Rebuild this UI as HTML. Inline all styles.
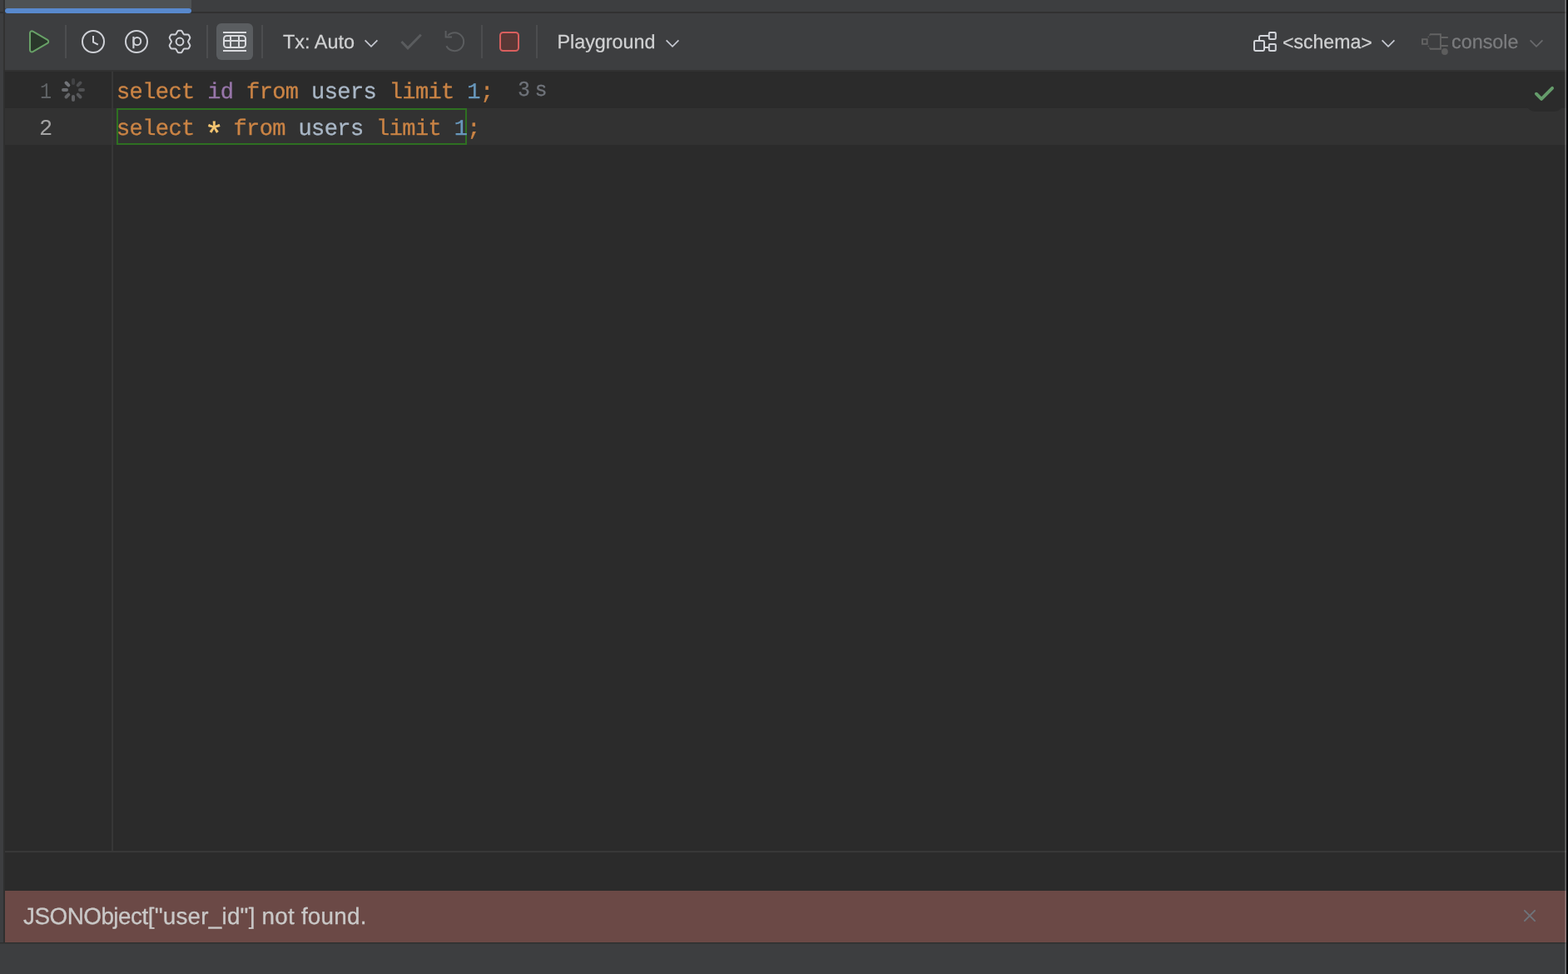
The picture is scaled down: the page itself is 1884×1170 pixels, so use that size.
<!DOCTYPE html>
<html lang="en">
<head>
<meta charset="utf-8">
<title>Query Console</title>
<style>
*{box-sizing:border-box;margin:0;padding:0}
html,body{width:1884px;height:1170px;overflow:hidden;background:#3d3e40}
body{position:relative;font-family:"Liberation Sans",sans-serif;color:#ced0d6}
.abs{position:absolute}
#frame{will-change:transform;text-rendering:geometricPrecision;position:absolute;left:0;top:0;width:1884px;height:1170px;overflow:hidden;background:#3d3e40}
/* window edges */
#leftline{left:4px;top:0;width:2px;height:1133px;background:linear-gradient(180deg,#323232 0,#323232 84px,#2f2f2f 84px,#2f2f2f 100%)}
#rightlight{left:1880px;top:0;width:2px;height:1170px;background:linear-gradient(90deg,rgba(255,255,255,0.19) 0,rgba(255,255,255,0.19) 50%,rgba(255,255,255,0.27) 50%,rgba(255,255,255,0.27) 100%)}
#rightblack{left:1882px;top:0;width:2px;height:1170px;background:#050609}
/* tab strip */
#tab{left:6px;top:0;width:224px;height:10px;background:#4e5254}
#tabline{left:0;top:14px;width:1882px;height:2px;background:#313131}
#tabblue{left:6px;top:10px;width:224px;height:6px;border-radius:3px;background:#5889cd}
/* toolbar */
#toolbar{left:6px;top:16px;width:1876px;height:68px;background:#3d3e40}
#toolline{left:6px;top:84px;width:1876px;height:2px;background:#323232}
.sep{position:absolute;top:30px;width:2px;height:40px;background:#4c4d4f}
.tt{position:absolute;white-space:pre;font-size:23.3px;line-height:28px;height:28px;top:36px;color:#d0d1d2;-webkit-text-stroke:0.25px;transform-origin:0 0;transform:scaleX(1)}
svg{position:absolute;overflow:visible}
/* editor */
#editor{left:6px;top:86px;width:1876px;height:936px;background:#2b2b2b}
#row2{left:6px;top:130px;width:1876px;height:44px;background:#323232}
#gutline{left:134px;top:86px;width:2px;height:936px;background:#373737}
#edline{left:6px;top:1022px;width:1876px;height:2px;background:#383838}
#below{left:6px;top:1024px;width:1876px;height:46px;background:#2b2b2b}
.code{position:absolute;left:140px;white-space:pre;font-family:"Liberation Mono",monospace;font-size:27px;letter-spacing:-0.6px;line-height:44px;height:44px;color:#a9b7c6;margin-top:3.7px;-webkit-text-stroke:0.3px}
.kw{color:#cb8445}.col{color:#9876aa}.num{color:#6897bb}.star{color:#f7c772;display:inline-block;transform:translateY(9.1px) scale(1.45);transform-origin:50% 50%}
.ln{position:absolute;font-family:"Liberation Mono",monospace;font-size:27px;line-height:44px;height:44px;left:47px;width:16px;text-align:center;margin-top:3.9px}
#box{left:140px;top:130px;width:421px;height:44px;border:2px solid #2e7021}
#hint{left:622.8px;top:86px;height:44px;line-height:44px;font-size:24.5px;word-spacing:0.8px;color:#6f737a;white-space:pre;-webkit-text-stroke:0.3px}
#status{left:1834px;top:86px;width:44px;height:48px;background:#2b2b2b;border-radius:0 0 10px 10px}
/* error */
#err{left:6px;top:1070px;width:1876px;height:62px;background:#6b4946}
#errtext{left:28.4px;top:1069.8px;height:62px;line-height:62px;font-size:27.9px;color:#c9c8c7;-webkit-text-stroke:0.3px;white-space:pre;transform-origin:0 0;transform:scaleX(0.998)}
#errline{left:0;top:1132px;width:1882px;height:2px;background:linear-gradient(180deg,#2e3030 0,#2e3030 50%,#353636 50%,#353636 100%)}
</style>
</head>
<body>
<div id="frame">
  <div class="abs" id="tab"></div>
  <div class="abs" id="tabline"></div>
  <div class="abs" id="tabblue"></div>
  <div class="abs" id="toolbar"></div>
  <div class="abs" id="toolline"></div>

  <svg class="abs" id="i-run" style="left:32px;top:34px" width="32" height="32" viewBox="0 0 32 32"><path d="M4.00 5.69 A2.3 2.3 0 0 1 7.45 3.70 L25.07 13.91 A2.3 2.3 0 0 1 25.07 17.89 L7.45 28.10 A2.3 2.3 0 0 1 4.00 26.11 Z" fill="#2a372b" stroke="#68a167" stroke-width="2" stroke-linejoin="round"/></svg>
  <div class="sep" style="left:78px"></div>
  <svg class="abs" id="i-clock" style="left:96px;top:34px" width="32" height="32" viewBox="0 0 32 32"><circle cx="16" cy="16" r="13" fill="none" stroke="#ced0d6" stroke-width="2"/><path d="M16 9 V16.6 L21.8 19.6" fill="none" stroke="#ced0d6" stroke-width="2"/></svg>
  <svg class="abs" id="i-p" style="left:148px;top:34px" width="32" height="32" viewBox="0 0 32 32"><circle cx="16" cy="16" r="13" fill="none" stroke="#ced0d6" stroke-width="2"/><path d="M12.4 9.9 V24.2" fill="none" stroke="#ced0d6" stroke-width="2.1"/><ellipse cx="16.8" cy="15.6" rx="4.4" ry="4.7" fill="none" stroke="#ced0d6" stroke-width="2"/></svg>
  <svg class="abs" id="i-gear" style="left:200px;top:34px" width="32" height="32" viewBox="0 0 32 32"><path d="M13.42 3.50 A1.6 1.6 0 0 1 14.80 2.70 L17.20 2.70 A1.6 1.6 0 0 1 18.58 3.50 L20.44 6.71 A1.6 1.6 0 0 0 21.82 7.51 L25.53 7.51 A1.6 1.6 0 0 1 26.92 8.31 L28.12 10.39 A1.6 1.6 0 0 1 28.12 11.99 L26.26 15.20 A1.6 1.6 0 0 0 26.26 16.80 L28.12 20.01 A1.6 1.6 0 0 1 28.12 21.61 L26.92 23.69 A1.6 1.6 0 0 1 25.53 24.49 L21.82 24.49 A1.6 1.6 0 0 0 20.44 25.29 L18.58 28.50 A1.6 1.6 0 0 1 17.20 29.30 L14.80 29.30 A1.6 1.6 0 0 1 13.42 28.50 L11.56 25.29 A1.6 1.6 0 0 0 10.18 24.49 L6.47 24.49 A1.6 1.6 0 0 1 5.08 23.69 L3.88 21.61 A1.6 1.6 0 0 1 3.88 20.01 L5.74 16.80 A1.6 1.6 0 0 0 5.74 15.20 L3.88 11.99 A1.6 1.6 0 0 1 3.88 10.39 L5.08 8.31 A1.6 1.6 0 0 1 6.47 7.51 L10.18 7.51 A1.6 1.6 0 0 0 11.56 6.71 Z" fill="none" stroke="#ced0d6" stroke-width="2" stroke-linejoin="round"/><circle cx="16" cy="16" r="4.4" fill="none" stroke="#ced0d6" stroke-width="2"/></svg>
  <div class="sep" style="left:248px"></div>
  <div class="abs" id="tblbtn" style="left:260px;top:28px;width:44px;height:44px;border-radius:6px;background:#5a5d60"></div>
  <svg class="abs" id="i-table" style="left:266px;top:34px" width="32" height="32" viewBox="0 0 32 32"><path d="M2 5 H30 M2 27 H30" stroke="#d9dade" stroke-width="2" fill="none"/><rect x="3" y="9" width="26" height="14" rx="3.5" fill="none" stroke="#d9dade" stroke-width="2"/><path d="M3 15 H29 M11 9 V23 M21 9 V23" stroke="#d9dade" stroke-width="2" fill="none"/></svg>
  <div class="sep" style="left:314px"></div>
  <div class="tt" style="left:340.4px;transform:scaleX(1.006)">Tx: Auto</div>
  <svg class="abs chev" style="left:436px;top:42px" width="20" height="20" viewBox="0 0 20 20"><path d="M2.6 6.4 L10 13.8 L17.4 6.4" fill="none" stroke="#c6c9d2" stroke-width="1.7"/></svg>
  <svg class="abs" id="i-check" style="left:478px;top:34px" width="32" height="32" viewBox="0 0 32 32"><path d="M4.4 16 L12 23.8 L27.8 7.8" fill="none" stroke="#5a5c5e" stroke-width="3"/></svg>
  <svg class="abs" id="i-undo" style="left:530px;top:34px" width="32" height="32" viewBox="0 0 32 32"><path d="M6.4 21.2 A11 11 0 1 0 8.2 8.6" fill="none" stroke="#5b5d5f" stroke-width="2"/><path d="M5.6 3 V10.4 H13" fill="none" stroke="#5b5d5f" stroke-width="2"/></svg>
  <div class="sep" style="left:578px"></div>
  <div class="abs" id="stop" style="left:600px;top:38px;width:24px;height:24px;border:2px solid #d95f5e;border-radius:4.5px;background:#593836"></div>
  <div class="sep" style="left:644px"></div>
  <div class="tt" style="left:669.5px">Playground</div>
  <svg class="abs chev" style="left:798px;top:42px" width="20" height="20" viewBox="0 0 20 20"><path d="M2.6 6.4 L10 13.8 L17.4 6.4" fill="none" stroke="#c6c9d2" stroke-width="1.7"/></svg>
  <svg class="abs" id="i-schema" style="left:1504px;top:34px" width="32" height="32" viewBox="0 0 32 32"><rect x="3" y="15" width="12" height="12" rx="1.4" fill="#43454a" stroke="#d3d5da" stroke-width="2"/><rect x="20.8" y="5" width="8" height="8" rx="1.3" fill="#43454a" stroke="#d3d5da" stroke-width="2"/><rect x="20.8" y="19" width="8" height="8" rx="1.3" fill="#43454a" stroke="#d3d5da" stroke-width="2"/><path d="M9 15 V11 Q9 9 11 9 H20.8 M15 23 H20.8" fill="none" stroke="#d3d5da" stroke-width="2"/></svg>
  <div class="tt" style="left:1541px;transform:scaleX(0.99)"><span style="position:relative;top:1.3px">&lt;</span>schema<span style="position:relative;top:1.3px">&gt;</span></div>
  <svg class="abs chev" style="left:1658px;top:42px" width="20" height="20" viewBox="0 0 20 20"><path d="M2.6 6.4 L10 13.8 L17.4 6.4" fill="none" stroke="#c6c9d2" stroke-width="1.7"/></svg>
  <svg class="abs" id="i-console" style="left:1706px;top:34px" width="36" height="36" viewBox="0 0 36 36"><rect x="3" y="13.2" width="5.7" height="5.6" fill="none" stroke="#626262" stroke-width="2"/><path d="M12 7.3 H24.9 V24.7 H12" fill="none" stroke="#636363" stroke-width="1.9"/><path d="M12.4 7.6 L9.4 11.4 M12.4 24.4 L9.4 20.6" fill="none" stroke="#5a5a5a" stroke-width="1.6" stroke-dasharray="1.6 1"/><path d="M25.8 10.9 H33.8 M25.8 21 H33.8" stroke="#636363" stroke-width="2" fill="none"/><circle cx="29.9" cy="28" r="3.9" fill="#5d5d5d"/></svg>
  <div class="tt" style="left:1743.8px;color:#7b7c7e;transform:scaleX(1.002)">console</div>
  <svg class="abs chev" style="left:1836px;top:42px" width="20" height="20" viewBox="0 0 20 20"><path d="M2.6 6.4 L10 13.8 L17.4 6.4" fill="none" stroke="#696a6c" stroke-width="1.8"/></svg>

  <div class="abs" id="editor"></div>
  <div class="abs" id="row2"></div>
  <div class="abs" id="gutline"></div>
  <div class="abs" id="edline"></div>
  <div class="abs" id="below"></div>

  <div class="ln" style="top:86px;color:#606366;transform:scaleX(0.87)">1</div>
  <div class="ln" style="top:130px;color:#a4a3a3">2</div>
  <svg class="abs" id="spinner" style="left:72px;top:92px" width="32" height="32" viewBox="0 0 32 32"><path d="M16.00 8.00 L16.00 4.00" stroke="#414244" stroke-width="4" stroke-linecap="round" fill="none"/><path d="M21.66 10.34 L24.49 7.51" stroke="#4c4d4f" stroke-width="4" stroke-linecap="round" fill="none"/><path d="M24.00 16.00 L28.00 16.00" stroke="#505153" stroke-width="4" stroke-linecap="round" fill="none"/><path d="M21.66 21.66 L24.49 24.49" stroke="#57585b" stroke-width="4" stroke-linecap="round" fill="none"/><path d="M16.00 24.00 L16.00 28.00" stroke="#5d5e61" stroke-width="4" stroke-linecap="round" fill="none"/><path d="M10.34 21.66 L7.51 24.49" stroke="#626366" stroke-width="4" stroke-linecap="round" fill="none"/><path d="M8.00 16.00 L4.00 16.00" stroke="#6b6d71" stroke-width="4" stroke-linecap="round" fill="none"/><path d="M10.34 10.34 L7.51 7.51" stroke="#727479" stroke-width="4" stroke-linecap="round" fill="none"/></svg>
  <div class="abs" id="box"></div>
  <div class="code" style="top:86px"><span class="kw">select</span> <span class="col">id</span> <span class="kw">from</span> users <span class="kw">limit</span> <span class="num">1</span><span class="kw">;</span></div>
  <div class="code" style="top:130px"><span class="kw">select</span> <span class="star">*</span> <span class="kw">from</span> users <span class="kw">limit</span> <span class="num">1</span><span class="kw">;</span></div>
  <div class="abs" id="hint">3 s</div>
  <div class="abs" id="status"></div>
  <svg class="abs" id="i-ok" style="left:1840px;top:96px" width="32" height="32" viewBox="0 0 32 32"><path d="M5.9 16.7 L12.1 22.9 L25.1 9.9" fill="none" stroke="#659c6b" stroke-width="3.9" stroke-linecap="round" stroke-linejoin="round"/></svg>

  <div class="abs" id="err"></div>
  <div class="abs" id="errtext"><span style="letter-spacing:-0.5px">JSONObject</span><span style="letter-spacing:0.22px">["user_id"] not found.</span></div>

  <svg class="abs" id="i-close" style="left:1828px;top:1090px" width="20" height="20" viewBox="0 0 20 20"><path d="M3.9 3.9 L16.1 16.1 M16.1 3.9 L3.9 16.1" fill="none" stroke="#6f737a" stroke-width="2" stroke-linecap="round"/></svg>

  <div class="abs" id="errline"></div>
  <div class="abs" id="leftline"></div>
  <div class="abs" id="rightlight"></div>
  <div class="abs" id="rightblack"></div>
</div>
</body>
</html>
